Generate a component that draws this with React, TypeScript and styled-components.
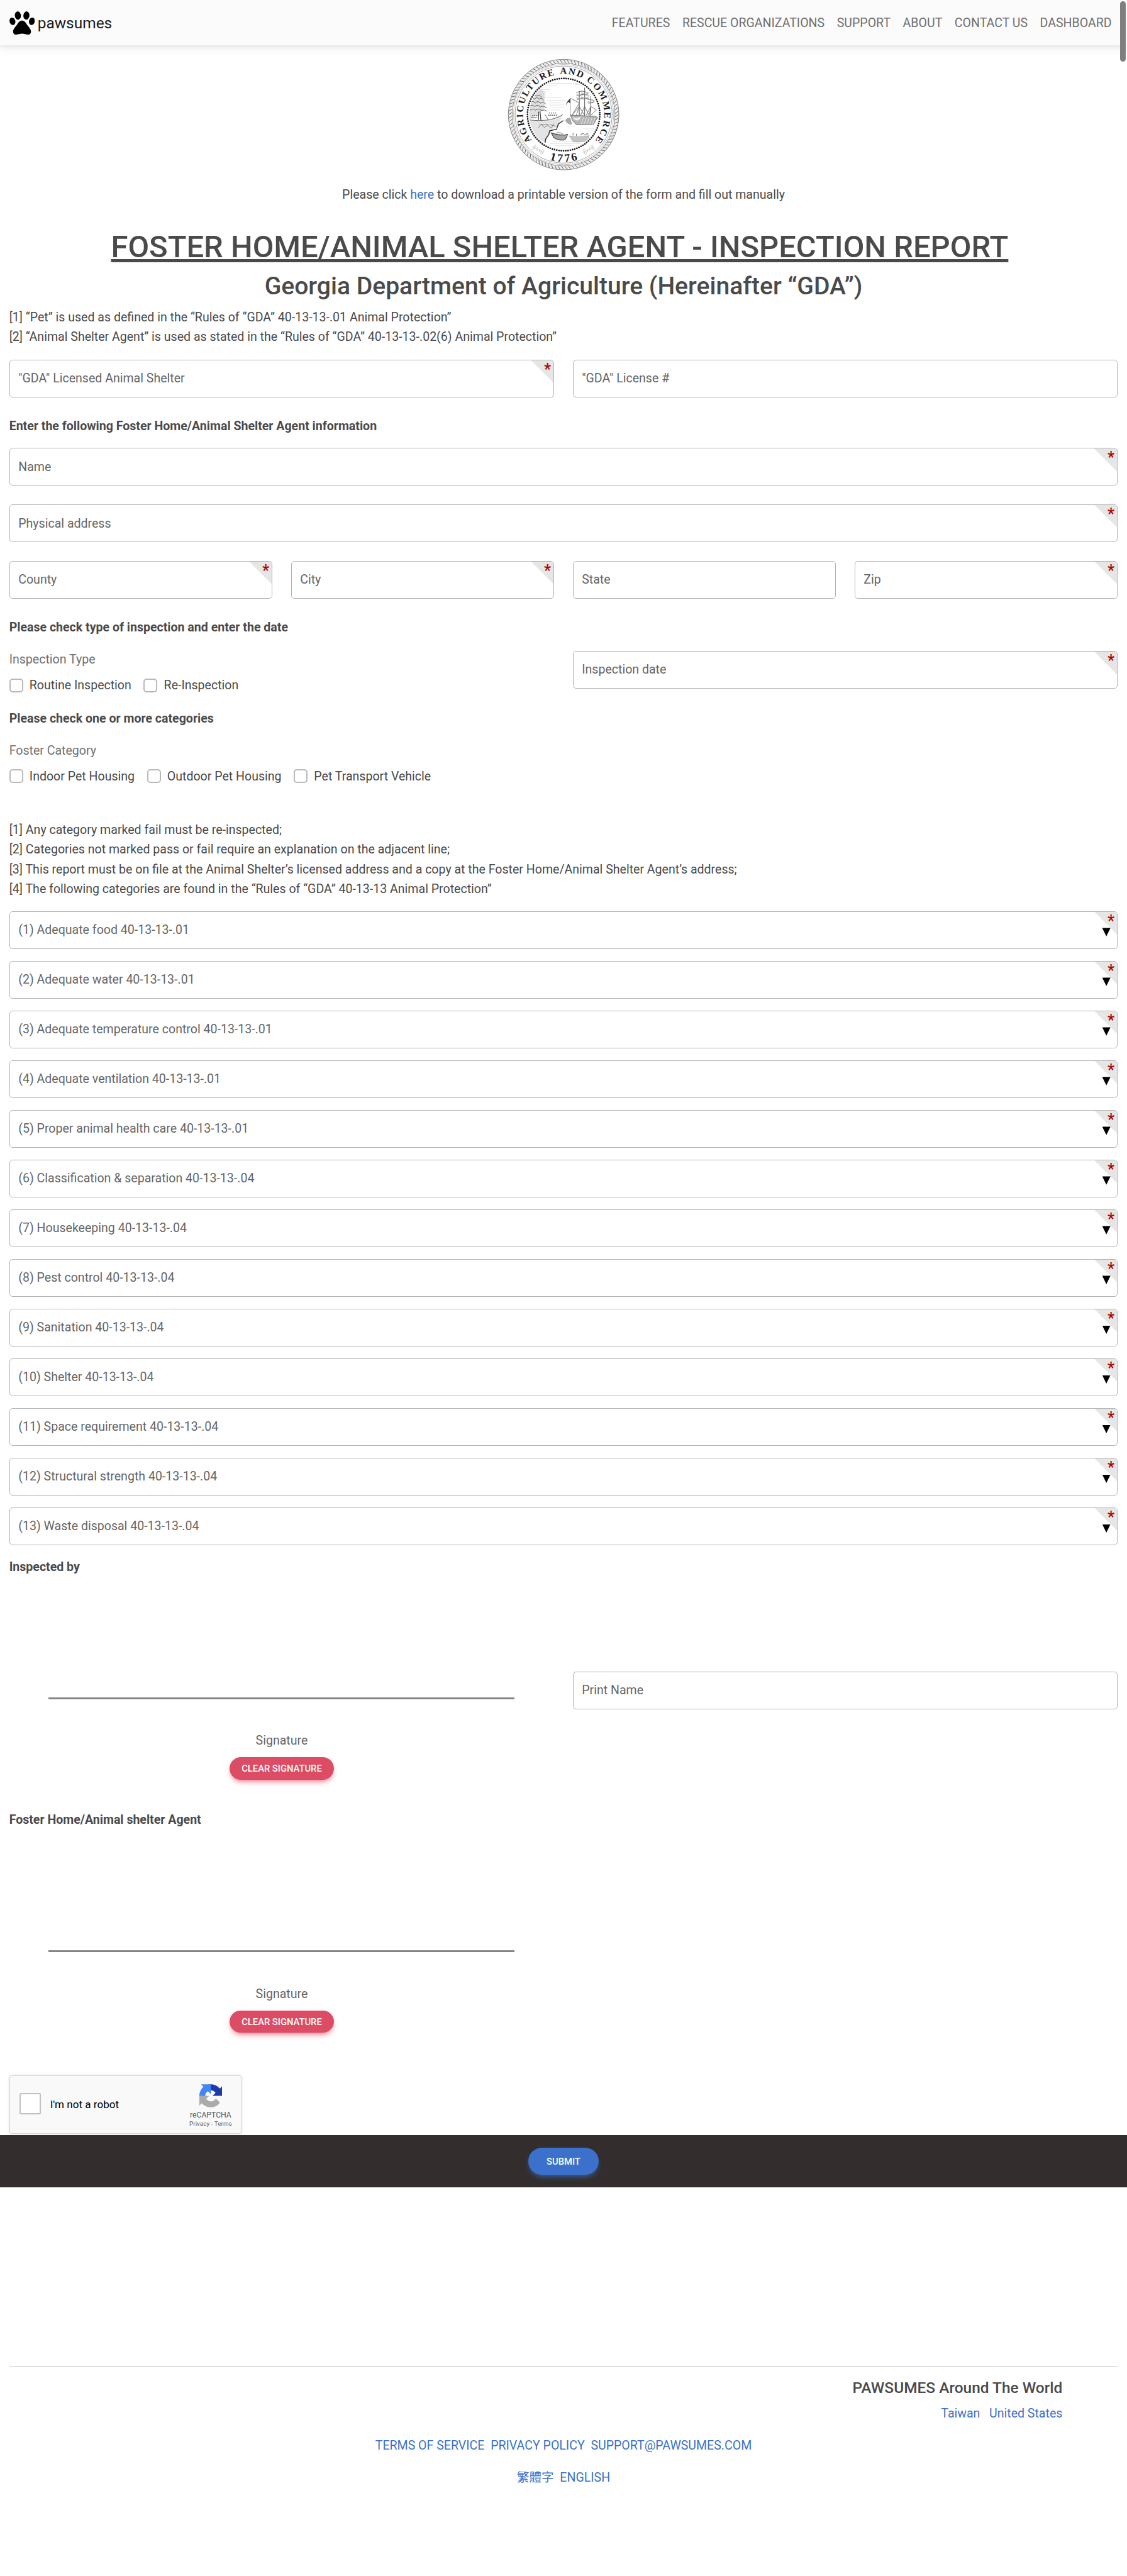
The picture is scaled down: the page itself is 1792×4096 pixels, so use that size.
import React from "react";
import styled, { createGlobalStyle } from "styled-components";

const Global = createGlobalStyle`
  *, *::before, *::after { box-sizing: border-box; }
  body {
    margin: 0;
    background: #fff;
    color: #4a4a4a;
    font-family: Roboto, "Noto Sans CJK TC", sans-serif;
    font-size: 19.56px;
    line-height: 31.25px;
  }
`;

const Page = styled.div`
  position: relative;
  width: 1792px;
  height: 4096px;
  overflow: hidden;
`;

const Scrollbar = styled.div`
  position: absolute;
  z-index: 2;
  top: 2px;
  right: 2.5px;
  width: 8.5px;
  height: 96px;
  border-radius: 5px;
  background: #7f7f7f;
`;

const Navbar = styled.header`
  display: flex;
  align-items: center;
  justify-content: space-between;
  height: 71.6px;
  padding: 0 14.65px;
  background: #fbfbfb;
  box-shadow: 0 5px 15px 0 rgba(0, 0, 0, 0.07), 0 2.5px 5px rgba(0, 0, 0, 0.05);
`;

const Brand = styled.a`
  display: flex;
  align-items: center;
  gap: 4.6px;
  color: #191919;
  font-size: 24.45px;
  svg { display: block; margin-top: 1.5px; }
  span { padding-top: 2px; }
`;

const NavLinks = styled.nav`
  display: flex;
  padding-top: 1px;
`;

const NavLink = styled.a`
  padding: 0 9.77px;
  color: #707070;
`;

const Main = styled.main`
  display: flex;
  flex-direction: column;
  padding: 21.6px 14.65px 0;
`;

const SealBox = styled.div`
  display: flex;
  justify-content: center;
  height: 178.4px;
  margin-bottom: 22px;
`;

const Centered = styled.p`
  margin: 0;
  text-align: center;
`;

const Link = styled.a`
  color: #3b71ca;
`;

const Title = styled.h1`
  margin: 39.3px 0 9.5px;
  font-size: 48.88px;
  font-weight: 500;
  line-height: 58.6px;
  text-align: center;
  u { text-decoration-thickness: 4.6px; text-underline-offset: 3px; text-decoration-skip-ink: none; }
`;

const Subtitle = styled.h2`
  margin: 0 0 10px;
  font-size: 39.1px;
  font-weight: 500;
  line-height: 46.9px;
  text-align: center;
`;

const Notes = styled.div<{ $top?: number; $bottom: number }>`
  margin-top: ${(p) => p.$top ?? 0}px;
  margin-bottom: ${(p) => p.$bottom}px;
`;

const Heading = styled.div<{ $top?: number; $bottom?: number }>`
  margin-top: ${(p) => p.$top ?? 0}px;
  margin-bottom: ${(p) => p.$bottom ?? 0}px;
  font-weight: 700;
`;

const Row = styled.div<{ $cols: number }>`
  display: grid;
  grid-template-columns: repeat(${(p) => p.$cols}, 1fr);
  column-gap: 29.3px;
`;

const Stack = styled.div<{ $gap: number }>`
  display: grid;
  row-gap: ${(p) => p.$gap}px;
`;

const Box = styled.div`
  position: relative;
  display: flex;
  align-items: center;
  height: 60px;
  padding: 0.6px 14px 0 13.6px;
  border: 1.34px solid #b3b3b3;
  border-radius: 5px;
  color: #666;
`;

const Corner = styled.span`
  position: absolute;
  top: 0;
  right: 0;
  width: 36.6px;
  height: 36.6px;
  border-top-right-radius: 4px;
  background: linear-gradient(to top right, transparent 50%, #e6e6e6 50%);
`;

const Star = styled.span`
  position: absolute;
  top: 3.4px;
  right: 4.2px;
  color: #b00000;
  font-size: 25px;
  font-weight: 500;
  line-height: 24px;
`;

const Arrow = styled.span`
  position: absolute;
  top: 25.8px;
  right: 10.6px;
  width: 13.2px;
  height: 13.4px;
  background: #000;
  clip-path: polygon(0 0, 100% 0, 50% 100%);
`;

const GroupLabel = styled.div<{ $bottom: number }>`
  margin-bottom: ${(p) => p.$bottom}px;
  color: #707070;
`;

const Checks = styled.div`
  display: flex;
  gap: 19.6px;
`;

const CheckLabel = styled.label`
  display: flex;
  align-items: center;
  gap: 10.2px;
`;

const CheckBox = styled.span`
  flex: none;
  width: 22px;
  height: 22px;
  border: 2.5px solid #b9b9b9;
  border-radius: 5px;
`;

const SignatureRow = styled(Row)`
  height: 371.25px;
  align-items: start;
`;

const SignaturePad = styled.div`
  display: flex;
  flex-direction: column;
  align-items: center;
`;

const SignatureLine = styled.div`
  width: 741px;
  height: 3px;
  margin: 191.8px 0 50.6px;
  background: #858585;
`;

const SignatureLabel = styled.div`
  color: #666;
`;

const PrintName = styled.div`
  margin-top: 150.8px;
`;

const Button = styled.button<{ $color: string; $w: number; $h: number }>`
  width: ${(p) => p.$w}px;
  height: ${(p) => p.$h}px;
  padding: 1px 0 0;
  border: 0;
  border-radius: 200px;
  background: ${(p) => p.$color};
  box-shadow: 0 5px 11px -4px ${(p) => p.$color};
  color: #fff;
  font: 500 14.75px Roboto, sans-serif;
`;

const ClearButton = styled(Button)`
  margin-top: 10.8px;
`;

const Captcha = styled.div`
  display: flex;
  align-items: center;
  width: 369.2px;
  height: 92.4px;
  margin-top: 19.6px;
  padding: 0 14px 0 15px;
  border: 1.3px solid #d3d3d3;
  border-radius: 3.6px;
  background: #f9f9f9;
  box-shadow: 0 0 4px 1px rgba(0, 0, 0, 0.08);
  color: #000;
  font-size: 17.09px;
`;

const CaptchaCheck = styled.span`
  width: 34px;
  height: 34px;
  margin: 0 15px 2px 0;
  border: 2.4px solid #c1c1c1;
  border-radius: 2.5px;
  background: #fff;
`;

const CaptchaBadge = styled.div`
  display: flex;
  flex-direction: column;
  align-items: center;
  margin-left: auto;
  padding-top: 4px;
  color: #555;
  font-size: 12.2px;
  line-height: 14px;
  svg { display: block; margin-bottom: 5.4px; }
  small { margin-top: 0.5px; font-size: 9.77px; line-height: 12px; letter-spacing: 0.1px; }
`;

const SubmitBar = styled.div`
  display: flex;
  justify-content: center;
  height: 82.7px;
  margin-top: 2.6px;
  padding-top: 19.4px;
  background: #332d2d;
`;

const Footer = styled.footer`
  display: flex;
  flex-direction: column;
  margin: 284px 14.65px 0;
  padding-top: 19.2px;
  border-top: 1.5px solid #cfcfcf;
`;

const World = styled.div`
  display: flex;
  flex-direction: column;
  align-items: flex-end;
  gap: 11px;
  padding-right: 88px;
  margin-bottom: 19.2px;
  strong { font-size: 24.45px; font-weight: 500; line-height: 29.3px; }
`;

const LinkRow = styled.div<{ $gap: number; $bottom?: number }>`
  display: flex;
  justify-content: center;
  gap: ${(p) => p.$gap}px;
  margin-bottom: ${(p) => p.$bottom ?? 0}px;
`;

function Paw() {
  return (
    <svg width="40.5" height="37.2" viewBox="0 0 40.5 37.2">
      <ellipse cx="13.4" cy="6.7" rx="4.8" ry="6.6" transform="rotate(-6 13.4 6.7)" />
      <ellipse cx="27" cy="6.7" rx="4.8" ry="6.6" transform="rotate(6 27 6.7)" />
      <ellipse cx="4.8" cy="15.9" rx="4.6" ry="6" transform="rotate(-14 4.8 15.9)" />
      <ellipse cx="35.7" cy="15.9" rx="4.6" ry="6" transform="rotate(14 35.7 15.9)" />
      <path d="M20 14.8c-3.4 0-5.6 2.6-7.3 5.5-1.5 2.7-3.4 4.3-5.2 6.9-1.4 2-2 4-1.5 6.3.5 2.5 2 3.600 4.300 3.400 3.500-.3 6.300-1.500 9.700-1.500s6.200 1.200 9.700 1.500c2.300.2 3.900-.9 4.400-3.400.4-2.300-.2-4.300-1.600-6.300-1.700-2.600-3.700-4.200-5.200-6.900-1.700-2.900-3.900-5.500-7.300-5.500z" />
    </svg>
  );
}

const pt = (deg: number, r: number) => {
  const a = (deg * Math.PI) / 180;
  return `${(478 + r * Math.sin(a)).toFixed(1)} ${(458 - r * Math.cos(a)).toFixed(1)}`;
};
const arc = (from: number, to: number, r: number, sweep = 1) =>
  `M${pt(from, r)}A${r} ${r} 0 0 ${sweep} ${pt(to, r)}`;
const arcLength = (deg: number, r: number) => (deg * Math.PI * r) / 180;

const SealSvg = styled.svg`
  display: block;
  text { font-family: "Liberation Serif", serif; font-weight: 700; fill: #1c1c1c; }
`;

function Flourish({ x, y, flip }: { x: number; y: number; flip?: boolean }) {
  return (
    <g transform={`translate(${x} ${y}) scale(${flip ? -1 : 1} 1) rotate(28)`} fill="none" stroke="#bdbdbd" strokeWidth="3">
      <circle cx="-32" cy="-10" r="8" />
      <circle cx="-32" cy="10" r="8" />
      <circle cx="32" cy="-10" r="8" />
      <circle cx="32" cy="10" r="8" />
      <path d="M-44 0H44M-14 -12L-4 12M4 -12L14 12" />
    </g>
  );
}

function Seal() {
  const ticks = Array.from({ length: 96 }, (_, i) => i * 3.75);
  return (
    <SealSvg width="178.4" height="178.4" viewBox="78 58 800 800">
      <defs>
        <path id="arcLeft" d={arc(-129, -10, 290)} />
        <path id="arcTop" d={arc(-5, 35, 290)} />
        <path id="arcRight" d={arc(33.5, 135, 290)} />
        <path id="arcYear" d={arc(200, 160, 338, 0)} />
        <clipPath id="scene"><circle cx="478" cy="458" r="246" /></clipPath>
      </defs>
      <circle cx="478" cy="458" r="380" fill="none" stroke="#ececec" strokeWidth="26" />
      <g fill="none" stroke="#777">
        <circle cx="478" cy="458" r="394" strokeWidth="4" />
        <circle cx="478" cy="458" r="366" strokeWidth="3.5" />
        <circle cx="478" cy="458" r="357" strokeWidth="2" />
        <circle cx="478" cy="458" r="346" strokeWidth="3" />
      </g>
      <g stroke="#555" strokeWidth="4">
        {ticks.map((d) => (
          <path key={d} d={`M${pt(d, 392)}L${pt(d + 2.4, 367)}`} />
        ))}
      </g>
      <text fontSize="67"><textPath href="#arcLeft" textLength={arcLength(116, 290)}>AGRICULTURE</textPath></text>
      <text fontSize="67"><textPath href="#arcTop" textLength={arcLength(32, 290)}>AND</textPath></text>
      <text fontSize="67"><textPath href="#arcRight" textLength={arcLength(96, 290)}>COMMERCE</textPath></text>
      <text fontSize="82"><textPath href="#arcYear" startOffset="50%" textAnchor="middle" textLength="204">1776</textPath></text>
      <Flourish x={297} y={709} />
      <Flourish x={657} y={709} flip />

      <g clipPath="url(#scene)" fill="none" strokeLinecap="round">
        <g stroke="#d2d2d2" strokeWidth="3">
          <path d="M370 235h210M340 250h90M300 280h80M290 295h70M560 245h70M280 315h60M285 335h180M360 357h130M370 375h90M380 390h100M400 410h80M390 425h60" />
          <path d="M380 600h-10M400 650h200M380 665h220M420 680h130M500 540h60M620 560h100M640 575h80M650 660h40M560 690h60M280 590h70M290 610h60M310 630h40M620 640h90" />
        </g>
        <path d="M222 300L300 265L345 300L340 420L230 500Z" fill="#c9c9c9" opacity=".6" />
        <path d="M225 500L370 500L470 460L440 540L375 575L350 660L250 600Z" fill="#ddd" opacity=".8" />
        <g stroke="#4a4a4a" strokeWidth="4">
          <path d="M238 350q18-24 32 0q15-26 34 0q18-22 30 6M240 375q20-22 36 2q18-24 36 0q22-14 40 6M236 400q20-20 36 2q20-22 40 2q22-14 44 6M250 330q18-20 36-4q20-12 36 8M240 425q20-16 38 2q20-18 42 2q20-10 38 4" />
          <path d="M300 440L298 495M310 436L316 498" strokeWidth="6" />
        </g>
        <g stroke="#333" strokeWidth="5" strokeDasharray="5 9">
          <path d="M255 465h45M250 480h40M370 462h60M375 447h55" />
        </g>
        <path d="M235 497q70 8 130 0q60-10 106-38M345 458l24 40" stroke="#555" strokeWidth="4" />
        <path d="M300 550l18-24 22 24 24-16 26 20 18-30M310 530h60M380 530l40 10" stroke="#777" strokeWidth="4" />
        <path d="M474 502L440 525L428 562L378 574L372 600L350 632L346 656" stroke="#222" strokeWidth="6" />
        <path d="M500 372L524 342V378L510 366L496 392Z" fill="#333" />
        <path d="M527 340V470" stroke="#999" strokeWidth="4" />
        <path d="M488 500q20-30 40-14l10 44q-30 4-50-30z" fill="#aaa" />
        <path d="M528 462L700 470L720 478L690 530H570Q540 510 528 462Z" fill="#b5b5b5" stroke="#666" strokeWidth="4" />
        <path d="M540 475q30 16 66-4l-20 28q-30 6-46-24z" fill="#eee" />
        <path d="M620 480l-16 44M640 480l-16 46M660 480l-16 46M680 482l-16 46M700 484l-16 46" stroke="#eee" strokeWidth="4" />
        <g stroke="#666" strokeWidth="4">
          <path d="M590 290V462M628 268V466M672 330V466" strokeWidth="5" />
          <path d="M530 344L590 374L540 460L590 400L625 460M590 400L570 460M628 400L600 460M628 400L660 465L672 400L712 425L665 470M672 400L640 460" />
          <path d="M570 300l40-10M568 325l46-8M572 350l40-6M606 290l44 10M604 315l52 4M606 345l48-2M650 350l44 6M652 376l42-2" />
        </g>
        <g stroke="#aaa" strokeWidth="5">
          <path d="M570 312q20 14 44-4M570 338q22 12 44-4M606 303q24 16 50 2M606 332q26 12 50-2M652 364q20 12 44 0" />
        </g>
        <path d="M390 588Q450 612 506 600Q496 632 480 640Q430 640 408 622Z" fill="#a8a8a8" stroke="#444" strokeWidth="5" />
        <path d="M425 592q20-14 46 4" stroke="#888" strokeWidth="5" />
        <path d="M520 610Q580 622 660 608L650 646Q580 660 545 650Z" fill="#c4c4c4" stroke="#999" strokeWidth="3" />
        <path d="M545 605v-14M570 608v-12M600 604q14-24 28 0M635 604q10-16 18-6" stroke="#777" strokeWidth="5" />
      </g>
      <circle cx="478" cy="458" r="258" fill="none" stroke="#111" strokeWidth="12" strokeLinecap="round" strokeDasharray="0.1 16.11" />
    </SealSvg>
  );
}

function Field({ label, required, select }: { label: string; required?: boolean; select?: boolean }) {
  return (
    <Box>
      {label}
      {required && <Corner />}
      {required && <Star>*</Star>}
      {select && <Arrow />}
    </Box>
  );
}

function Checkbox({ label }: { label: string }) {
  return (
    <CheckLabel>
      <CheckBox />
      {label}
    </CheckLabel>
  );
}

function Signature() {
  return (
    <SignaturePad>
      <SignatureLine />
      <SignatureLabel>Signature</SignatureLabel>
      <ClearButton $color="#dc4c64" $w={165.6} $h={35.4}>CLEAR SIGNATURE</ClearButton>
    </SignaturePad>
  );
}

const navItems = ["FEATURES", "RESCUE ORGANIZATIONS", "SUPPORT", "ABOUT", "CONTACT US", "DASHBOARD"];

const categories = [
  "(1) Adequate food 40-13-13-.01",
  "(2) Adequate water 40-13-13-.01",
  "(3) Adequate temperature control 40-13-13-.01",
  "(4) Adequate ventilation 40-13-13-.01",
  "(5) Proper animal health care 40-13-13-.01",
  "(6) Classification & separation 40-13-13-.04",
  "(7) Housekeeping 40-13-13-.04",
  "(8) Pest control 40-13-13-.04",
  "(9) Sanitation 40-13-13-.04",
  "(10) Shelter 40-13-13-.04",
  "(11) Space requirement 40-13-13-.04",
  "(12) Structural strength 40-13-13-.04",
  "(13) Waste disposal 40-13-13-.04",
];

export default function App() {
  return (
    <Page>
      <Global />
      <Scrollbar />
      <Navbar>
        <Brand>
          <Paw />
          <span>pawsumes</span>
        </Brand>
        <NavLinks>
          {navItems.map((n) => <NavLink key={n}>{n}</NavLink>)}
        </NavLinks>
      </Navbar>

      <Main>
        <SealBox><Seal /></SealBox>
        <Centered>
          Please click <Link>here</Link> to download a printable version of the form and fill out manually
        </Centered>
        <Title><u>FOSTER HOME/ANIMAL SHELTER AGENT - INSPECTION REPORT</u>&nbsp;</Title>
        <Subtitle>Georgia Department of Agriculture (Hereinafter “GDA”)</Subtitle>
        <Notes $bottom={20}>
          <div>[1] “Pet” is used as defined in the “Rules of “GDA” 40-13-13-.01 Animal Protection”</div>
          <div>[2] “Animal Shelter Agent” is used as stated in the “Rules of “GDA” 40-13-13-.02(6) Animal Protection”</div>
        </Notes>
        <Row $cols={2}>
          <Field label={'"GDA" Licensed Animal Shelter'} required />
          <Field label={'"GDA" License #'} />
        </Row>

        <Heading $top={30} $bottom={19.2}>Enter the following Foster Home/Animal Shelter Agent information</Heading>
        <Stack $gap={29.8}>
          <Field label="Name" required />
          <Field label="Physical address" required />
          <Row $cols={4}>
            <Field label="County" required />
            <Field label="City" required />
            <Field label="State" />
            <Field label="Zip" required />
          </Row>
        </Stack>

        <Heading $top={30.4} $bottom={20.1}>Please check type of inspection and enter the date</Heading>
        <Row $cols={2}>
          <div>
            <GroupLabel $bottom={9.4}>Inspection Type</GroupLabel>
            <Checks>
              <Checkbox label="Routine Inspection" />
              <Checkbox label="Re-Inspection" />
            </Checks>
          </div>
          <div>
            <Notes $top={1.2} $bottom={0}><Field label="Inspection date" required /></Notes>
          </div>
        </Row>

        <Heading $top={22.2} $bottom={19.2}>Please check one or more categories</Heading>
        <GroupLabel $bottom={9.6}>Foster Category</GroupLabel>
        <Checks>
          <Checkbox label="Indoor Pet Housing" />
          <Checkbox label="Outdoor Pet Housing" />
          <Checkbox label="Pet Transport Vehicle" />
        </Checks>

        <Notes $top={54.2} $bottom={19.4}>
          <div>[1] Any category marked fail must be re-inspected;</div>
          <div>[2] Categories not marked pass or fail require an explanation on the adjacent line;</div>
          <div>[3] This report must be on file at the Animal Shelter’s licensed address and a copy at the Foster Home/Animal Shelter Agent’s address;</div>
          <div>[4] The following categories are found in the “Rules of “GDA” 40-13-13 Animal Protection”</div>
        </Notes>
        <Stack $gap={19.03}>
          {categories.map((c) => <Field key={c} label={c} required select />)}
        </Stack>

        <Heading $top={18.8}>Inspected by</Heading>
        <SignatureRow $cols={2}>
          <Signature />
          <PrintName><Field label="Print Name" /></PrintName>
        </SignatureRow>
        <Heading>Foster Home/Animal shelter Agent</Heading>
        <SignatureRow $cols={2}>
          <Signature />
        </SignatureRow>

        <Captcha>
          <CaptchaCheck />
          I'm not a robot
          <CaptchaBadge>
            <svg width="36.6" height="37" viewBox="0 0 64 64">
              <path fill="#1c3aa9" d="M64 31.955l-.033-1.37V4.687l-7.16 7.16C50.948 4.674 42.033.093 32.05.093c-10.4 0-19.622 4.96-25.458 12.64l11.736 11.86a15.55 15.55 0 0 1 4.754-5.334c2.05-1.6 4.952-2.906 8.968-2.906.485 0 .86.057 1.135.163 4.976.393 9.288 3.14 11.828 7.124l-8.307 8.307L64 31.953" />
              <path fill="#4285f4" d="M31.862.094l-1.37.033H4.594l7.16 7.16C4.58 13.147 0 22.06 0 32.046c0 10.4 4.96 19.622 12.64 25.458L24.5 45.768a15.55 15.55 0 0 1-5.334-4.754c-1.6-2.05-2.906-4.952-2.906-8.968 0-.485.057-.86.163-1.135.393-4.976 3.14-9.288 7.124-11.828l8.307 8.307L31.86.095" />
              <path fill="#ababab" d="M.001 32.045l.033 1.37v25.898l7.16-7.16c5.86 7.173 14.774 11.754 24.76 11.754 10.4 0 19.622-4.96 25.458-12.64l-11.736-11.86a15.55 15.55 0 0 1-4.754 5.334c-2.05 1.6-4.952 2.906-8.968 2.906-.485 0-.86-.057-1.135-.163-4.976-.393-9.288-3.14-11.828-7.124l8.307-8.307c-10.522.04-22.4.066-27.295-.005" />
            </svg>
            reCAPTCHA
            <small>Privacy - Terms</small>
          </CaptchaBadge>
        </Captcha>
      </Main>

      <SubmitBar>
        <Button $color="#3b71ca" $w={112.4} $h={43.9}>SUBMIT</Button>
      </SubmitBar>

      <Footer>
        <World>
          <strong>PAWSUMES Around The World</strong>
          <LinkRow $gap={14.6}><Link>Taiwan</Link><Link>United States</Link></LinkRow>
        </World>
        <LinkRow $gap={9.77} $bottom={19.5}>
          <Link>TERMS OF SERVICE</Link>
          <Link>PRIVACY POLICY</Link>
          <Link>SUPPORT@PAWSUMES.COM</Link>
        </LinkRow>
        <LinkRow $gap={9.77}>
          <Link>繁體字</Link>
          <Link>ENGLISH</Link>
        </LinkRow>
      </Footer>
    </Page>
  );
}
